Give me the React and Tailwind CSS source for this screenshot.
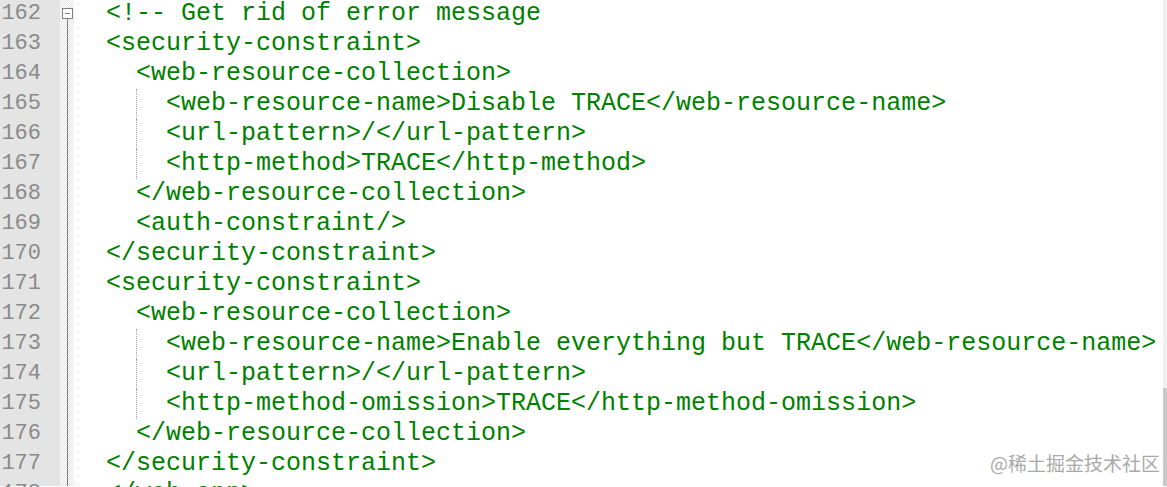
const lines = [
  { n: 162, text: '  <!-- Get rid of error message' },
  { n: 163, text: '  <security-constraint>' },
  { n: 164, text: '    <web-resource-collection>' },
  { n: 165, text: '      <web-resource-name>Disable TRACE</web-resource-name>', guide: true },
  { n: 166, text: '      <url-pattern>/</url-pattern>', guide: true },
  { n: 167, text: '      <http-method>TRACE</http-method>', guide: true },
  { n: 168, text: '    </web-resource-collection>' },
  { n: 169, text: '    <auth-constraint/>' },
  { n: 170, text: '  </security-constraint>' },
  { n: 171, text: '  <security-constraint>' },
  { n: 172, text: '    <web-resource-collection>' },
  { n: 173, text: '      <web-resource-name>Enable everything but TRACE</web-resource-name>', guide: true },
  { n: 174, text: '      <url-pattern>/</url-pattern>', guide: true },
  { n: 175, text: '      <http-method-omission>TRACE</http-method-omission>', guide: true },
  { n: 176, text: '    </web-resource-collection>' },
  { n: 177, text: '  </security-constraint>' },
  { n: 178, text: '  </web-app>' },
];

const mono = { fontFamily: '"Liberation Mono", "Courier New", monospace' };

export default function App() {
  return (
    <div className="relative w-[1167px] h-[487px] overflow-hidden bg-white">
      <div className="flex h-full -mt-[1px]">
        {/* line numbers */}
        <div className="w-[60px] shrink-0 bg-[#e4e4e4] pr-[19px] text-right text-[22px] text-[#8a8a8a]" style={mono}>
          {lines.map((l) => (
            <div key={l.n} className="h-[30px] leading-[30px]">{l.n}</div>
          ))}
        </div>

        {/* fold margin */}
        <div className="relative w-[14px] shrink-0 bg-[repeating-conic-gradient(#e6e6e6_0_25%,#ffffff_0_50%)] bg-[length:2px_2px]">
          <div className="absolute left-[7px] top-[19px] bottom-0 w-px bg-[#808080]" />
          <div className="absolute left-[2px] top-[9px] w-[11px] h-[11px] border border-[#808080] bg-white flex items-center justify-center">
            <div className="w-[5px] h-px bg-[#808080]" />
          </div>
        </div>

        {/* code */}
        <div className="flex-1 pl-[2px] text-[25px] text-[#008000]" style={mono}>
          {lines.map((l) => (
            <div key={l.n} className="relative h-[30px] leading-[30px] whitespace-pre">
              {l.guide && <div className="absolute left-[60px] top-0 bottom-0 border-l border-dotted border-[#a0a0a0]" />}
              {l.text}
            </div>
          ))}
        </div>

        {/* scrollbar edge */}
        <div className="w-[4px] shrink-0 flex flex-col mt-[1px]">
          <div className="h-[388px] bg-[#f0f0f0]" />
          <div className="flex-1 bg-[#c8c8c8]" />
        </div>
      </div>

      <div
        className="absolute left-[990px] top-[449px] text-[19px] text-[#a9a9a9] [text-shadow:0_0_2px_#ffffff]"
        style={{ fontFamily: '"Noto Sans CJK SC", "Noto Sans", sans-serif' }}
      >
        @稀土掘金技术社区
      </div>
    </div>
  );
}
